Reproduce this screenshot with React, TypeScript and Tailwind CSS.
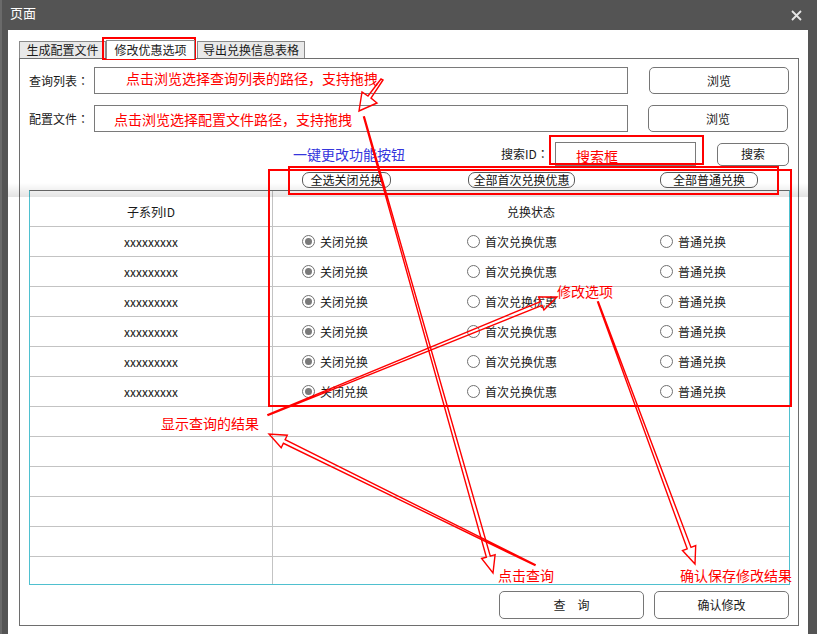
import React from "react";

function hollowArrow(
  x1: number,
  y1: number,
  x2: number,
  y2: number,
  shaft = 2,
  headLen = 17,
  headHalf = 7
) {
  const dx = x2 - x1;
  const dy = y2 - y1;
  const len = Math.hypot(dx, dy);
  const ux = dx / len;
  const uy = dy / len;
  const px = -uy;
  const py = ux;
  const bx = x2 - ux * headLen;
  const by = y2 - uy * headLen;
  const p = (x: number, y: number) => `${x.toFixed(1)},${y.toFixed(1)}`;
  return [
    p(x1 + px * 0.4, y1 + py * 0.4),
    p(bx + px * shaft, by + py * shaft),
    p(bx + px * headHalf, by + py * headHalf),
    p(x2, y2),
    p(bx - px * headHalf, by - py * headHalf),
    p(bx - px * shaft, by - py * shaft),
    p(x1 - px * 0.4, y1 - py * 0.4),
  ].join(" ");
}

function Colon() {
  return <span className="font-['Noto_Sans_CJK_TC',sans-serif]">：</span>;
}

function Radio({ checked, label }: { checked?: boolean; label: string }) {
  return (
    <div className="flex items-center">
      <span className="w-[13px] h-[13px] rounded-full border border-[#707070] bg-white flex items-center justify-center">
        {checked && <span className="w-[7px] h-[7px] rounded-full bg-[#7a7a7a]" />}
      </span>
      <span className="ml-[5px] text-[12px] leading-[16px] text-[#1a1a1a]">{label}</span>
    </div>
  );
}

function DataRow({ id, last }: { id?: string; last?: boolean }) {
  return (
    <div
      className={
        last
          ? "flex h-[27px]"
          : "flex h-[30px] border-b border-[#c3c3c3]"
      }
    >
      <div className="w-[243px] border-r border-[#c3c3c3] flex items-center justify-center text-[12px] leading-[16px] text-[#1a1a1a]">
        {id}
      </div>
      <div className="flex-1 flex items-center pl-[29px]">
        {id && (
          <>
            <div className="w-[165px]">
              <Radio checked label="关闭兑换" />
            </div>
            <div className="w-[193px]">
              <Radio label="首次兑换优惠" />
            </div>
            <div>
              <Radio label="普通兑换" />
            </div>
          </>
        )}
      </div>
    </div>
  );
}

export default function App() {
  const btn =
    "flex items-center justify-center border border-[#767676] rounded-[5px] bg-white text-[12px] leading-[16px] text-[#1a1a1a]";
  const pill =
    "h-[16px] flex items-center justify-center border border-[#5a5a5a] rounded-[7px] bg-white text-[12px] leading-[14px] text-[#111]";
  const input = "h-[27px] w-[534px] border border-[#7a7a7a] bg-white flex items-center";

  return (
    <div className="relative w-[817px] h-[634px] overflow-hidden bg-[#545454] font-['Noto_Sans_CJK_SC','Noto_Sans',sans-serif]">
      <div className="absolute left-0 top-0 w-[2px] h-[634px] bg-[#6a6a6a]" />
      {/* title bar */}
      <div className="h-[30px] flex items-start justify-between pl-[10px] pr-[15px]">
        <span className="pt-[5px] text-[13px] leading-[16px] text-white">页面</span>
        <svg width="11" height="11" viewBox="0 0 11 11" className="mt-[10px]">
          <path d="M1 1 L10 10 M10 1 L1 10" stroke="#e6e6e6" strokeWidth="1.8" />
        </svg>
      </div>

      {/* client area */}
      <div className="ml-[8px] w-[800px] h-[604px] bg-white pt-[10px] pl-[11px]">
        {/* tabs */}
        <div className="flex items-end h-[18px]">
          <div className="w-[87px] h-[17px] bg-[#e9e9e9] border border-b-0 border-[#8a8a8a] flex items-center justify-center text-[12px] leading-[14px] text-[#1a1a1a]">
            生成配置文件
          </div>
          <div className="relative z-10 -mb-[1px] w-[89px] h-[19px] bg-white border border-b-0 border-[#8a8a8a] flex items-center justify-center text-[12px] leading-[14px] text-[#1a1a1a]">
            修改优惠选项
          </div>
          <div className="ml-[2px] w-[108px] h-[17px] bg-[#e9e9e9] border border-b-0 border-[#8a8a8a] flex items-center justify-center text-[12px] leading-[14px] text-[#1a1a1a]">
            导出兑换信息表格
          </div>
        </div>

        {/* panel */}
        <div className="w-[780px] h-[568px] border border-[#6e6e6e]">
          {/* row 1 */}
          <div className="mt-[8px] ml-[9px] flex items-center h-[27px]">
            <div className="w-[65px] text-[12px] leading-[16px] text-[#1a1a1a]">
              查询列表<Colon />
            </div>
            <div className={input}>
              <span className="pl-[31px] pb-[5px] text-[14px] leading-[16px] text-[#ff0000]">
                点击浏览选择查询列表的路径，支持拖拽
              </span>
            </div>
            <div className={`${btn} ml-[21px] w-[140px] h-[27px]`}>浏览</div>
          </div>

          {/* row 2 */}
          <div className="mt-[11px] ml-[9px] flex items-center h-[27px]">
            <div className="w-[65px] text-[12px] leading-[16px] text-[#1a1a1a]">
              配置文件<Colon />
            </div>
            <div className={input}>
              <span className="pl-[19px] text-[14px] leading-[16px] text-[#ff0000]">
                点击浏览选择配置文件路径，支持拖拽
              </span>
            </div>
            <div className={`${btn} ml-[20px] w-[140px] h-[27px]`}>浏览</div>
          </div>

          {/* row 3 */}
          <div className="mt-[10px] ml-[9px] flex items-center h-[24px]">
            <div className="ml-[264px] w-[208px] text-[14px] leading-[16px] text-[#3535dc]">
              一键更改功能按钮
            </div>
            <div className="w-[54px] text-[12px] leading-[16px] text-[#1a1a1a] whitespace-nowrap">
              搜索ID<Colon />
            </div>
            <div className="w-[141px] h-[24px] border border-[#7a7a7a] bg-white pl-[20px]">
              <span className="text-[14px] leading-[16px] text-[#ff0000]">搜索框</span>
            </div>
            <div className={`${btn} ml-[21px] w-[72px] h-[23px]`}>搜索</div>
          </div>

          {/* row 4 */}
          <div className="mt-[6px] ml-[282px] flex h-[16px]">
            <div className={`${pill} w-[89px]`}>全选关闭兑换</div>
            <div className={`${pill} ml-[77px] w-[107px]`}>全部首次兑换优惠</div>
            <div className={`${pill} ml-[85px] w-[98px]`}>全部普通兑换</div>
          </div>

          {/* table */}
          <div className="mt-[2px] ml-[9px] w-[761px] border border-[#4fc0cf] border-t-[#6a6a6a]">
            <div className="flex h-[36px] border-b border-[#c3c3c3]">
              <div className="w-[243px] border-r border-[#c3c3c3] flex items-center justify-center pt-[7px] text-[12px] leading-[16px] text-[#1a1a1a]">
                子系列ID
              </div>
              <div className="flex-1 flex items-center justify-center pt-[7px] text-[12px] leading-[16px] text-[#1a1a1a]">
                兑换状态
              </div>
            </div>
            {Array.from({ length: 6 }).map((_, i) => (
              <DataRow key={i} id="xxxxxxxxx" />
            ))}
            {Array.from({ length: 5 }).map((_, i) => (
              <DataRow key={"e" + i} />
            ))}
            <DataRow last />
          </div>

          {/* bottom buttons */}
          <div className="mt-[6px] ml-[479px] flex gap-[10px]">
            <div className={`${btn} w-[145px] h-[28px]`}>查　询</div>
            <div className={`${btn} w-[135px] h-[28px]`}>确认修改</div>
          </div>
        </div>
      </div>

      {/* screenshot seam band */}
      <div className="absolute left-[8px] top-[183px] w-[800px] h-[14px] bg-gradient-to-b from-[rgba(0,0,0,0)] to-[rgba(0,0,0,0.11)] pointer-events-none" />

      {/* annotation overlay */}
      <svg
        className="absolute left-0 top-0 pointer-events-none"
        width="817"
        height="634"
        viewBox="0 0 817 634"
      >
        <g fill="none" stroke="#ff0000" strokeWidth="2">
          <rect x="103" y="38" width="92" height="21" />
          <rect x="550" y="136" width="153" height="28" />
          <rect x="289" y="167" width="489" height="27" />
          <rect x="269" y="170" width="522" height="236" />
        </g>
        <g fill="none" stroke="#ff0000" strokeWidth="1.4" strokeLinejoin="miter">
          <polygon points="383,80 371,98 377,103 359,111 362,92 368,96 381,79" />
          <polygon points={hollowArrow(364, 117, 493, 573)} />
          <polygon points={hollowArrow(598, 302, 695, 564)} />
          <polygon points={hollowArrow(268, 415, 557, 297)} />
          <polygon points={hollowArrow(535, 565, 269, 434)} />
        </g>
      </svg>

      <span className="absolute left-[161px] top-[415px] text-[14px] leading-[16px] text-[#ff0000]">
        显示查询的结果
      </span>
      <span className="absolute left-[557px] top-[283px] text-[14px] leading-[16px] text-[#ff0000]">
        修改选项
      </span>
      <span className="absolute left-[498px] top-[567px] text-[14px] leading-[16px] text-[#ff0000]">
        点击查询
      </span>
      <span className="absolute left-[680px] top-[567px] text-[14px] leading-[16px] text-[#ff0000]">
        确认保存修改结果
      </span>
    </div>
  );
}
